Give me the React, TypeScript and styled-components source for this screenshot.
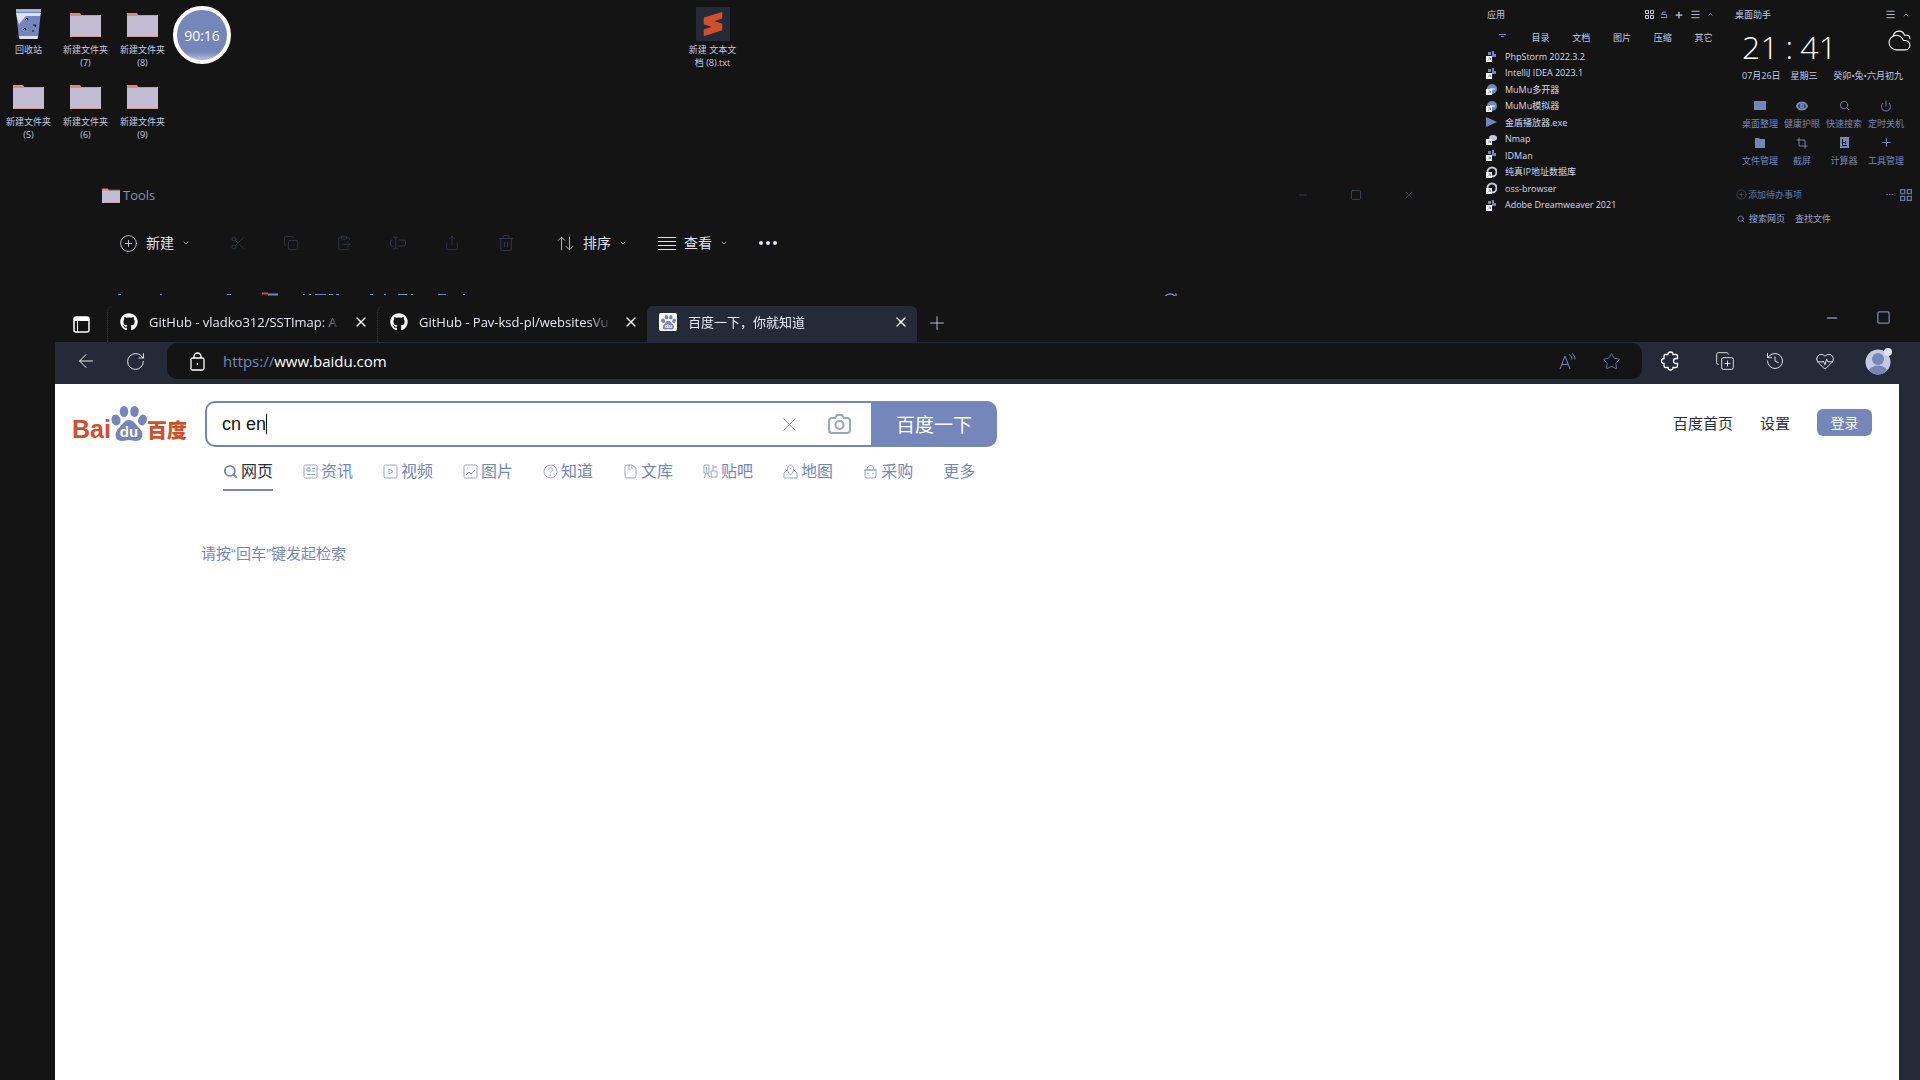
import React from "react";
import styled, { createGlobalStyle } from "styled-components";
import {
  ArrowUpDown, ArrowLeft, ChevronDown, ClipboardPaste, Cloudy, Copy, CopyPlus, Crop, Ellipsis, Eye,
  History, Menu, Minus, Plus, Power, RotateCw, Scissors, Search, Share,
  Square, Star, TextCursorInput, Trash2, X, CirclePlus, HeartPulse, ChevronUp,
} from "lucide-react";
import { FaGithub } from "react-icons/fa";
import { SiSublimetext } from "react-icons/si";

const c = {
  ink: "#141414",
  bar: "#252a39",
  blue: "#7586bb",
  pale: "#c3c9e2",
  dim: "#3a4260",
  red: "#d14f2b",
  white: "#ffffff",
};

const Global = createGlobalStyle`
  * { box-sizing: border-box; }
  body { margin: 0; background: ${c.ink}; }
  body, button, input { font-family: "Open Sans", "Noto Sans CJK SC", sans-serif; }
  button { padding: 0; border: 0; background: none; color: inherit; cursor: pointer; }
  a { color: inherit; text-decoration: none; }
  ul { list-style: none; margin: 0; padding: 0; }
  svg { display: block; flex: none; }
`;

const Desktop = styled.main`
  position: relative;
  min-height: 100vh;
  overflow: hidden;
  background: ${c.ink};
  color: ${c.white};
`;

/* ---------- desktop shortcuts ---------- */
const Shortcuts = styled.div`
  position: absolute;
  top: 8px;
  left: 0;
  display: grid;
  grid-template-columns: repeat(3, 57px);
  grid-auto-rows: 72px;
`;
const Shortcut = styled.button`
  display: flex;
  flex-direction: column;
  align-items: center;
  justify-content: flex-start;
  gap: 3px;
  width: 57px;
  font-size: 9px;
  line-height: 13px;
  color: ${c.pale};
`;
const ShortcutArt = styled.span`
  display: flex;
  align-items: center;
  justify-content: center;
  height: 32px;
`;
const LooseShortcut = styled.div`
  position: absolute;
  top: 8px;
  left: 684px;
`;
const SublimeTile = styled.span`
  display: flex;
  align-items: center;
  justify-content: center;
  width: 34px;
  height: 34px;
  background: ${c.bar};
  color: ${c.red};
`;
const Timer = styled.div`
  position: absolute;
  top: 6px;
  left: 173px;
  display: flex;
  align-items: center;
  justify-content: center;
  width: 58px;
  height: 58px;
  border: 4px solid ${c.white};
  border-radius: 50%;
  background: linear-gradient(${c.blue} 84%, #a9b3d6 96%);
  font-size: 14px;
`;

const Folder = ({ w = 31, h = 25 }: { w?: number; h?: number }) => (
  <svg width={w} height={h} viewBox="0 0 31 25" preserveAspectRatio="none" aria-hidden="true">
    <path d="M0 1h10l2 3v8H0z" fill="#d98a78" />
    <path d="M0 4h31v21H0z" fill="#c2bdd2" />
    <path d="M11 3.500h20M0 24.500h31" stroke="#d59a90" />
  </svg>
);

const Bin = () => (
  <svg width="27" height="32" viewBox="0 0 27 32" aria-hidden="true">
    <path d="M1 3h25l-3 28H4z" fill={c.blue} />
    <path d="M1 1h25v3H1z" fill="#aab3d4" />
    <path d="M1 5h25l-1 3H11L4 16 2 10z" fill="#dde1ef" />
    <path d="M4 28h19l-1 3H5z" fill="#dde1ef" />
    <path d="M10 12l2-2 1 2M8 22l2-2 1 2M18 17h3l-1 2M17 23h2" stroke={c.ink} fill="none" />
  </svg>
);

/* ---------- app list widget ---------- */
const Apps = styled.section`
  position: absolute;
  top: 8px;
  right: 196px;
  width: 240px;
  font-size: 9px;
  line-height: 13px;
  color: ${c.pale};
`;
const WidgetHead = styled.header`
  display: flex;
  align-items: center;
  justify-content: space-between;
  height: 13px;
  padding: 0 10px 0 3px;
`;
const WidgetTools = styled.div`
  display: flex;
  align-items: center;
  gap: 6px;
`;
const AppTabs = styled.nav`
  display: grid;
  grid-template-columns: 36px repeat(5, 1fr);
  margin-top: 10px;
  text-align: center;
`;
const AppTab = styled.button`
  display: flex;
  align-items: center;
  justify-content: center;
  height: 13px;
  font-size: 9px;
`;
const AppList = styled.ul`
  display: grid;
  grid-template-rows: repeat(10, 1fr);
  height: 165px;
  margin-top: 4px;
`;
const AppRow = styled.li`
  display: flex;
  align-items: center;
  gap: 8px;
  padding-left: 2px;
  color: #d6daeb;
`;

type AppArt = "badge" | "disc" | "play" | "ring" | "dot";
const AppIcon = ({ kind }: { kind: AppArt }) => (
  <svg width="11" height="12" viewBox="0 0 11 12" aria-hidden="true">
    {kind === "play" && <path d="M0 1l11 5-11 5z" fill={c.blue} />}
    {kind === "badge" && <path d="M2 2h3v3H2zM6 1h2v3h2v3H6z" fill={c.blue} />}
    {kind === "disc" && <circle cx="6" cy="6" r="5" fill={c.blue} />}
    {kind === "disc" && <path d="M4 6h5" stroke={c.white} />}
    {kind === "ring" && <circle cx="6" cy="6" r="4.500" fill="none" stroke={c.pale} strokeWidth="2" />}
    {kind === "dot" && <ellipse cx="7" cy="5" rx="4" ry="3" fill={c.pale} />}
    {kind !== "play" && <path d="M0 6h6v6H0z" fill={c.white} />}
    {kind !== "play" && <path d="M2 10.500l2-2M2.500 8h2v2" stroke={c.blue} fill="none" />}
  </svg>
);

const apps: { name: string; kind: AppArt }[] = [
  { name: "PhpStorm 2022.3.2", kind: "badge" },
  { name: "IntelliJ IDEA 2023.1", kind: "badge" },
  { name: "MuMu多开器", kind: "disc" },
  { name: "MuMu模拟器", kind: "disc" },
  { name: "金盾播放器.exe", kind: "play" },
  { name: "Nmap", kind: "dot" },
  { name: "IDMan", kind: "badge" },
  { name: "纯真IP地址数据库", kind: "ring" },
  { name: "oss-browser", kind: "ring" },
  { name: "Adobe Dreamweaver 2021", kind: "badge" },
];

/* ---------- assistant widget ---------- */
const Assistant = styled.section`
  position: absolute;
  top: 8px;
  right: 8px;
  width: 180px;
  font-size: 9px;
  line-height: 13px;
  color: ${c.pale};
`;
const AssistantHead = styled(WidgetHead)`
  padding: 0 2px 0 3px;
`;
const ClockRow = styled.div`
  display: flex;
  justify-content: space-between;
  height: 46px;
  padding: 7px 0 0 10px;
  color: ${c.white};
`;
const Clock = styled.time`
  display: flex;
  gap: 7px;
  font-size: 32px;
  font-weight: 300;
  line-height: 38px;
`;
const DateRow = styled.div`
  display: flex;
  justify-content: space-between;
  margin-top: 2px;
  padding: 0 9px 0 10px;
`;
const DateGroup = styled.div`
  display: flex;
  gap: 10px;
`;
const Actions = styled.div`
  display: grid;
  grid-template-columns: repeat(4, 1fr);
  row-gap: 5px;
  margin: 16px 5px 0 7px;
`;
const Action = styled.button`
  display: flex;
  flex-direction: column;
  align-items: center;
  gap: 4px;
  font-size: 9px;
  line-height: 13px;
  color: ${c.blue};
  white-space: nowrap;
`;
const ActionArt = styled.span`
  display: flex;
  align-items: center;
  justify-content: center;
  height: 15px;
`;
const Todo = styled.div`
  display: flex;
  align-items: center;
  justify-content: space-between;
  margin-top: 21px;
  padding-left: 4px;
  color: #6674a3;
`;
const TodoAdd = styled.button`
  display: flex;
  align-items: center;
  gap: 1px;
  font-size: 9px;
  line-height: 13px;
`;
const Finder = styled.div`
  display: flex;
  align-items: center;
  gap: 10px;
  margin-top: 11px;
  padding-left: 5px;
  color: #97a3cc;
`;
const FinderLink = styled.a`
  display: flex;
  align-items: center;
  gap: 4px;
`;

/* ---------- explorer window ---------- */
const Explorer = styled.section`
  position: absolute;
  top: 176px;
  left: 90px;
  width: 1360px;
  height: 120px;
  overflow: hidden;
`;
const ExplorerTitle = styled.header`
  display: flex;
  align-items: center;
  gap: 3px;
  height: 38px;
  padding: 0 35px 0 12px;
  font-size: 13px;
  color: #8491bd;
`;
const ExplorerControls = styled.div`
  display: flex;
  gap: 41px;
  margin-left: auto;
  color: #56628c;
`;
const ExplorerBar = styled.div`
  display: flex;
  align-items: center;
  height: 58px;
  padding: 0 0 0 29px;
`;
const Command = styled.button`
  display: flex;
  align-items: center;
  gap: 8px;
  font-size: 14px;
  line-height: 18px;
  color: #dfe3f1;
`;
const Faded = styled.div`
  display: flex;
  align-items: center;
  gap: 37px;
  margin: 0 41px 0 40px;
  color: ${c.dim};
`;
const Commands = styled.div`
  display: flex;
  align-items: center;
  gap: 31px;
`;
const PathRow = styled.div`
  display: flex;
  justify-content: space-between;
  padding: 20px 272px 0 5px;
  color: ${c.blue};
`;

/* ---------- browser window ---------- */
const Browser = styled.section`
  position: absolute;
  top: 300px;
  right: 0;
  bottom: 0;
  left: 55px;
  display: flex;
  flex-direction: column;
  background: ${c.ink};
`;
const TabStrip = styled.header`
  display: flex;
  align-items: stretch;
  height: 42px;
  padding: 6px 29px 0 18px;
`;
const TabMenu = styled.button`
  display: flex;
  align-items: center;
  width: 34px;
`;
const Tab = styled.div<{ $active?: boolean }>`
  display: flex;
  align-items: center;
  gap: 11px;
  width: 270px;
  padding: 0 8px 4px 12px;
  border-radius: 6px 6px 0 0;
  border-left: ${(p) => (p.$active ? "0" : "1px dotted " + c.dim)};
  background: ${(p) => (p.$active ? c.bar : "transparent")};
`;
const TabTitle = styled.span`
  flex: 1;
  overflow: hidden;
  font-size: 13px;
  line-height: 20px;
  white-space: nowrap;
  mask-image: linear-gradient(90deg, #000 88%, transparent);
  color: #e6e9f4;
`;
const NewTab = styled.button`
  display: flex;
  align-items: center;
  margin-left: 9px;
  padding-bottom: 2px;
  color: ${c.pale};
`;
const BrowserControls = styled.div`
  display: flex;
  align-items: center;
  gap: 36px;
  margin-left: auto;
  padding-bottom: 13px;
  color: ${c.blue};
`;
const Toolbar = styled.div`
  display: flex;
  align-items: center;
  height: 42px;
  padding: 0 27px 4px 20px;
  background: ${c.bar};
`;
const ToolGroup = styled.div<{ $gap: number }>`
  display: flex;
  align-items: center;
  gap: ${(p) => p.$gap}px;
`;
const AddressBar = styled.label`
  display: flex;
  flex: 1;
  align-items: center;
  height: 36px;
  margin: 0 19px 0 21px;
  padding: 0 21px 0 23px;
  border-radius: 10px;
  background: ${c.ink};
  font-size: 15px;
`;
const Scheme = styled.span`
  margin-left: 18px;
  color: ${c.blue};
`;
const AddressInput = styled.input`
  flex: 1;
  min-width: 0;
  padding: 0;
  border: 0;
  outline: 0;
  background: transparent;
  color: ${c.white};
  font-size: 15px;
`;
const Avatar = styled.button`
  width: 28px;
  height: 28px;
`;
const Body = styled.div`
  display: flex;
  flex: 1;
  padding-right: 21px;
  background: ${c.bar};
`;
const Page = styled.article`
  flex: 1;
  padding: 17px 27px 0 17px;
  background: ${c.white};
  color: ${c.ink};
  font-family: "Liberation Sans", "Noto Sans CJK SC", sans-serif;
`;
const PageTop = styled.div`
  display: flex;
  align-items: flex-start;
`;
const Logo = styled.a`
  display: flex;
  flex: none;
  align-items: flex-end;
  width: 115px;
  height: 41px;
  margin-right: 18px;
  color: ${c.red};
  font-weight: 900;
  white-space: nowrap;
`;
const LogoLatin = styled.span`
  width: 39px;
  font-size: 25px;
  line-height: 25px;
`;
const LogoHan = styled.span`
  font-family: "Noto Sans CJK SC", sans-serif;
  font-size: 20px;
  line-height: 24px;
`;
const SearchForm = styled.form`
  display: flex;
  width: 792px;
  height: 46px;
`;
const SearchBox = styled.label`
  display: flex;
  flex: 1;
  align-items: center;
  padding: 0 20px 0 15px;
  border: 2px solid ${c.blue};
  border-right: 0;
  border-radius: 10px 0 0 10px;
`;
const Query = styled.input`
  field-sizing: content;
  padding: 0;
  border: 0;
  outline: 0;
  color: ${c.ink};
  font-family: "Liberation Sans", sans-serif;
  font-size: 18px;
`;
const Caret = styled.span`
  width: 1px;
  height: 20px;
  background: ${c.ink};
`;
const SearchTools = styled.div`
  display: flex;
  align-items: center;
  gap: 27px;
  margin-left: auto;
  color: ${c.blue};
`;
const Submit = styled.button`
  width: 126px;
  border-radius: 0 10px 10px 0;
  background: ${c.blue};
  color: ${c.white};
  font-size: 19px;
`;
const Account = styled.nav`
  display: flex;
  align-items: center;
  gap: 27px;
  margin: 6px 0 0 auto;
  font-size: 15px;
  line-height: 27px;
`;
const AccountLink = styled.a`
  padding-top: 3px;
  color: #2b2f40;
`;
const Login = styled.button`
  width: 55px;
  height: 27px;
  border-radius: 6px;
  background: ${c.blue};
  color: ${c.white};
  font-size: 14px;
`;
const Channels = styled.nav`
  display: flex;
  gap: 30px;
  margin: 13px 0 0 151px;
`;
const Channel = styled.a<{ $on?: boolean }>`
  display: flex;
  align-items: center;
  gap: 3px;
  height: 31px;
  padding-bottom: 6px;
  border-bottom: 2px solid ${(p) => (p.$on ? c.blue : "transparent")};
  color: ${(p) => (p.$on ? "#2b2f40" : c.blue)};
  font-size: 16px;
  line-height: 22px;
`;
const Hint = styled.p`
  margin: 52px 0 0 129px;
  color: ${c.blue};
  font-size: 15px;
  line-height: 22px;
`;

const Paw = ({ size }: { size: number }) => (
  <svg width={size} height={size} viewBox="0 0 36 36" aria-hidden="true">
    <g fill={c.blue}>
      <ellipse cx="5" cy="14" rx="4.500" ry="5.500" transform="rotate(-15 5 14)" />
      <ellipse cx="13" cy="5.500" rx="4.200" ry="5.500" />
      <ellipse cx="23.500" cy="5.500" rx="4.200" ry="5.500" />
      <ellipse cx="31.500" cy="14" rx="4.300" ry="5.500" transform="rotate(15 31.500 14)" />
      <path d="M18 14c5 0 7 5 10 8 5 4 5 13-3 13-3 0-4-1-7-1s-4 1-7 1c-8 0-8-9-3-13 3-3 5-8 10-8z" />
    </g>
    <text x="18" y="31" textAnchor="middle" fontFamily="Liberation Sans" fontWeight="700" fontSize="15" fill={c.white}>du</text>
  </svg>
);

const BaiduTile = styled.span`
  display: flex;
  align-items: center;
  justify-content: center;
  width: 18px;
  height: 18px;
  border-radius: 2px;
  background: ${c.white};
`;

const Camera = () => (
  <svg width="23" height="20" viewBox="0 0 23 20" fill="none" stroke="#98a4cc" strokeWidth="2" aria-hidden="true">
    <path d="M4 4h3l2-3h5l2 3h3a3 3 0 0 1 3 3v9a3 3 0 0 1-3 3H4a3 3 0 0 1-3-3V7a3 3 0 0 1 3-3z" />
    <circle cx="11.500" cy="11" r="4" />
  </svg>
);

const channelPaths: Record<string, string> = {
  资讯: "M2.500 1h10a1.500 1.500 0 0 1 1.500 1.500v10a1.500 1.500 0 0 1-1.500 1.500h-10A1.500 1.500 0 0 1 1 12.500v-10A1.500 1.500 0 0 1 2.500 1zM4 4h3v3H4zM9 4.500h3M9 7h3M4 10.500h8",
  视频: "M2.500 1h10a1.500 1.500 0 0 1 1.500 1.500v10a1.500 1.500 0 0 1-1.500 1.500h-10A1.500 1.500 0 0 1 1 12.500v-10A1.500 1.500 0 0 1 2.500 1zM6 5l4 2.500L6 10z",
  图片: "M2.500 1h10a1.500 1.500 0 0 1 1.500 1.500v10a1.500 1.500 0 0 1-1.500 1.500h-10A1.500 1.500 0 0 1 1 12.500v-10A1.500 1.500 0 0 1 2.500 1zM3 11l3-3 2 2 4-4M4 4h1",
  知道: "M7.500 1a6.500 6.500 0 1 1 0 13 6.500 6.500 0 0 1 0-13zM5.500 6c0-3 4-3 4 0 0 1.500-2 1.500-2 3M7.500 10.500v1",
  文库: "M4 1h5l4 3v8a2 2 0 0 1-2 2H4a2 2 0 0 1-2-2V3a2 2 0 0 1 2-2zM6 1v5M9 1v4",
  贴吧: "M1 1h5v8H1zM3.500 3v5M3 9l-2 5M4 9l3 4M10 1v6M10 3h4M8 7h6v6H8z",
  地图: "M4 6L1 9v5h13V9l-3-3M7.500 11C3 7 4 1 7.500 1S12 7 7.500 11zM7.500 4v1",
  采购: "M2 6h11v6a2 2 0 0 1-2 2H4a2 2 0 0 1-2-2zM1 6h13M4 6c0-6 7-6 7 0M5 9v1M10 9v1",
};
const ChannelIcon = ({ name }: { name: string }) => (
  <svg width="15" height="15" viewBox="0 0 15 15" fill="none" stroke="#98a4cc" aria-hidden="true">
    <path d={channelPaths[name]} />
  </svg>
);

const DeskPlate = () => (
  <svg width="12" height="10" viewBox="0 0 12 10" aria-hidden="true">
    <path d="M0 0h12v9H0z" fill={c.blue} />
    <path d="M3 3h1M7 3h1M5 6h1M9 6h1" stroke={c.red} />
  </svg>
);
const FolderPlate = () => (
  <svg width="10" height="10" viewBox="0 0 10 10" aria-hidden="true">
    <path d="M0 0h4l1 1h5v9H0z" fill={c.blue} />
    <path d="M2 4h1M6 4h1M4 7h1" stroke={c.red} />
  </svg>
);
const CalcPlate = () => (
  <svg width="9" height="11" viewBox="0 0 9 11" aria-hidden="true">
    <path d="M0 0h9v11H0z" fill={c.blue} />
    <path d="M2.500 2v7M2 8.500h5M3 5.500h3M5.500 4v3" stroke={c.ink} />
  </svg>
);
const FourSquares = ({ size }: { size: number }) => (
  <svg width={size} height={size} viewBox="0 0 9 9" fill="none" stroke="currentColor" aria-hidden="true">
    <path d="M.5.5h3v3h-3zM5.500.5h3v3h-3zM.5 5.500h3v3h-3zM5.500 5.500h3v3h-3z" />
  </svg>
);
const Loop = () => (
  <svg width="8" height="8" viewBox="0 0 8 8" fill="none" stroke={c.blue} aria-hidden="true">
    <path d="M6 1H3L1.500 3.500H6.500L7 6.500H1" />
  </svg>
);

const actions: { label: string; art: React.ReactNode }[] = [
  { label: "桌面整理", art: <DeskPlate /> },
  { label: "健康护眼", art: <Eye size={12} strokeWidth={4} /> },
  { label: "快速搜索", art: <Search size={11} /> },
  { label: "定时关机", art: <Power size={12} /> },
  { label: "文件管理", art: <FolderPlate /> },
  { label: "截屏", art: <Crop size={12} /> },
  { label: "计算器", art: <CalcPlate /> },
  { label: "工具管理", art: <Plus size={13} /> },
];

const ReadAloud = () => (
  <svg width="17" height="17" viewBox="0 0 17 17" fill="none" stroke={c.blue} aria-hidden="true">
    <path d="M1 16L6 3l5 13M3 11.500h6M10 1.500c2 1 3 3 3 5M13 .5c2 1 3 3.500 3 6" />
  </svg>
);
const Panel = () => (
  <svg width="17" height="17" viewBox="0 0 17 17" fill="none" stroke={c.white} aria-hidden="true">
    <rect x="1" y="1" width="15" height="15" rx="2" strokeWidth="1.500" />
    <path d="M1 3h15" strokeWidth="4" />
    <path d="M4.500 4v12" />
  </svg>
);
const Padlock = () => (
  <svg width="15" height="19" viewBox="0 0 15 19" fill="none" stroke={c.white} strokeWidth="1.300" aria-hidden="true">
    <rect x="1" y="6" width="13" height="12" rx="1.500" />
    <path d="M4 6V4.500a3.500 3.500 0 0 1 7 0V6" />
    <path d="M7.500 11v2" />
  </svg>
);
const Extension = () => (
  <svg width="24" height="20" viewBox="0 0 24 20" fill="none" stroke={c.white} strokeWidth="1.300" aria-hidden="true">
    <path d="M4 3.500h3a2.500 2.500 0 0 1 5 0h3a1.500 1.500 0 0 1 1.500 1.500v2.500h-1.500a2.500 2.500 0 0 0 0 5h1.500V15a1.500 1.500 0 0 1-1.500 1.500h-3a2.500 2.500 0 0 1-5 0H4.500A1.500 1.500 0 0 1 3 15v-2.500a2.500 2.500 0 0 1 0-5V5a1.500 1.500 0 0 1 1-1.500z" />
  </svg>
);

export default function App() {
  return (
    <>
      <Global />
      <Desktop>
        <Shortcuts>
          <Shortcut><ShortcutArt><Bin /></ShortcutArt>回收站</Shortcut>
          {[7, 8, 5, 6, 9].map((n) => (
            <Shortcut key={n}>
              <ShortcutArt><Folder /></ShortcutArt>
              <span>新建文件夹<br />({n})</span>
            </Shortcut>
          ))}
        </Shortcuts>
        <Timer>90:16</Timer>
        <LooseShortcut>
          <Shortcut>
            <ShortcutArt><SublimeTile><SiSublimetext size={24} /></SublimeTile></ShortcutArt>
            <span>新建 文本文<br />档 (8).txt</span>
          </Shortcut>
        </LooseShortcut>

        <Apps>
          <WidgetHead>
            <span>应用</span>
            <WidgetTools>
              <FourSquares size={9} />
              <Loop />
              <Plus size={10} strokeWidth={3} />
              <Menu size={11} />
              <ChevronUp size={7} />
            </WidgetTools>
          </WidgetHead>
          <AppTabs>
            <AppTab aria-label="Menu">
              <svg width="7" height="9" viewBox="0 0 7 9" stroke={c.blue} aria-hidden="true"><path d="M0 1.500h7M2 3.500h3" /></svg>
            </AppTab>
            {["目录", "文档", "图片", "压缩", "其它"].map((t) => <AppTab key={t}>{t}</AppTab>)}
          </AppTabs>
          <AppList>
            {apps.map((a) => (
              <AppRow key={a.name}>
                <AppIcon kind={a.kind} />
                <a href="#">{a.name}</a>
              </AppRow>
            ))}
          </AppList>
        </Apps>

        <Assistant>
          <AssistantHead>
            <span>桌面助手</span>
            <WidgetTools><Menu size={11} /><ChevronUp size={8} /></WidgetTools>
          </AssistantHead>
          <ClockRow>
            <Clock><span>21</span><span>:</span><span>41</span></Clock>
            <Cloudy size={25} strokeWidth={1} />
          </ClockRow>
          <DateRow>
            <DateGroup><span>07月26日</span><span>星期三</span></DateGroup>
            <span>癸卯•兔•六月初九</span>
          </DateRow>
          <Actions>
            {actions.map((a) => (
              <Action key={a.label}><ActionArt>{a.art}</ActionArt>{a.label}</Action>
            ))}
          </Actions>
          <Todo>
            <TodoAdd><CirclePlus size={11} strokeWidth={1} />添加待办事项</TodoAdd>
            <WidgetTools><Ellipsis size={9} /><FourSquares size={12} /></WidgetTools>
          </Todo>
          <Finder>
            <FinderLink href="#"><Search size={8} />搜索网页</FinderLink>
            <FinderLink href="#">查找文件</FinderLink>
          </Finder>
        </Assistant>

        <Explorer>
          <ExplorerTitle>
            <Folder w={18} h={15} />
            <span>Tools</span>
            <ExplorerControls>
              <Minus size={12} strokeWidth={1} />
              <Square size={12} strokeWidth={1} />
              <X size={12} strokeWidth={1} />
            </ExplorerControls>
          </ExplorerTitle>
          <ExplorerBar>
            <Command><CirclePlus size={19} strokeWidth={1} />新建<ChevronDown size={8} /></Command>
            <Faded>
              <Scissors size={16} strokeWidth={1} />
              <Copy size={16} strokeWidth={1} />
              <ClipboardPaste size={16} strokeWidth={1} />
              <TextCursorInput size={18} strokeWidth={1} />
              <Share size={16} strokeWidth={1} />
              <Trash2 size={18} strokeWidth={1} />
            </Faded>
            <Commands>
              <Command><ArrowUpDown size={19} strokeWidth={1} />排序<ChevronDown size={8} /></Command>
              <Command>
                <svg width="18" height="14" viewBox="0 0 18 14" stroke="currentColor" aria-hidden="true"><path d="M0 1.500h18M0 5.500h18M0 9.500h18M0 13.500h18" /></svg>
                查看<ChevronDown size={8} />
              </Command>
              <Command aria-label="More">
                <svg width="18" height="4" viewBox="0 0 18 4" fill="currentColor" aria-hidden="true"><circle cx="2" cy="2" r="2" /><circle cx="9" cy="2" r="2" /><circle cx="16" cy="2" r="2" /></svg>
              </Command>
            </Commands>
          </ExplorerBar>
          <PathRow>
            {/* the address row sits mostly behind the browser: only the tops of its marks show */}
            <svg width="380" height="5" viewBox="0 0 380 5" stroke="currentColor" aria-hidden="true">
              <path d="M23 2.500h3M65 2.500h2M132 2.500h4M208 2.500h2M214 2.500h2M220 2.500h11M234 2.500h4M241 2.500h3M275 2.500h3M289 2.500h2M303 2.500h9M316 2.500h2M343 2.500h8M368 2.500h2" />
              <path d="M167 1.500h6" stroke={c.red} strokeWidth="2" />
              <path d="M173 2.500h10" strokeWidth="2" />
            </svg>
            <RotateCw size={16} />
          </PathRow>
        </Explorer>

        <Browser>
          <TabStrip>
            <TabMenu aria-label="Tab actions"><Panel /></TabMenu>
            <Tab>
              <FaGithub size={18} />
              <TabTitle>GitHub - vladko312/SSTImap: A</TabTitle>
              <button aria-label="Close tab"><X size={16} strokeWidth={2} /></button>
            </Tab>
            <Tab>
              <FaGithub size={18} />
              <TabTitle>GitHub - Pav-ksd-pl/websitesVu</TabTitle>
              <button aria-label="Close tab"><X size={16} strokeWidth={2} /></button>
            </Tab>
            <Tab $active>
              <BaiduTile><Paw size={15} /></BaiduTile>
              <TabTitle>百度一下，你就知道</TabTitle>
              <button aria-label="Close tab"><X size={16} strokeWidth={2} /></button>
            </Tab>
            <NewTab aria-label="New tab"><Plus size={22} strokeWidth={1} /></NewTab>
            <BrowserControls>
              <Minus size={16} strokeWidth={2} />
              <Square size={15} strokeWidth={2} />
            </BrowserControls>
          </TabStrip>
          <Toolbar>
            <ToolGroup $gap={28}>
              <button aria-label="Back"><ArrowLeft size={22} strokeWidth={1} /></button>
              <button aria-label="Reload"><RotateCw size={21} strokeWidth={1} /></button>
            </ToolGroup>
            <AddressBar>
              <Padlock />
              <Scheme>https://</Scheme>
              <AddressInput aria-label="Address" defaultValue="www.baidu.com" />
              <ToolGroup $gap={26}>
                <ReadAloud />
                <Star size={19} strokeWidth={1} color={c.blue} />
              </ToolGroup>
            </AddressBar>
            <ToolGroup $gap={30}>
              <Extension />
              <CopyPlus size={20} strokeWidth={1} />
              <History size={20} strokeWidth={1} />
              <HeartPulse size={20} strokeWidth={1} />
              <Avatar aria-label="Profile">
                <svg width="28" height="28" viewBox="0 0 28 28" aria-hidden="true">
                  <circle cx="13" cy="15" r="12.500" fill={c.pale} />
                  <circle cx="13" cy="12" r="6" fill={c.blue} />
                  <path d="M4 23c3-6 15-6 18 0-4 6-14 6-18 0z" fill={c.blue} />
                  <path d="M14 9h1M10 13h1M8 22h1M18 21h1" stroke={c.red} />
                  <circle cx="23" cy="5" r="4" fill="#dfe3f1" />
                </svg>
              </Avatar>
            </ToolGroup>
          </Toolbar>
          <Body>
            <Page>
              <PageTop>
                <Logo href="#" aria-label="百度">
                  <LogoLatin>Bai</LogoLatin>
                  <Paw size={36} />
                  <LogoHan>百度</LogoHan>
                </Logo>
                <SearchForm onSubmit={(e) => e.preventDefault()}>
                  <SearchBox>
                    <Query aria-label="搜索" defaultValue="cn en" />
                    <Caret />
                    <SearchTools>
                      <X size={23} strokeWidth={1} />
                      <Camera />
                    </SearchTools>
                  </SearchBox>
                  <Submit type="submit">百度一下</Submit>
                </SearchForm>
                <Account>
                  <AccountLink href="#">百度首页</AccountLink>
                  <AccountLink href="#">设置</AccountLink>
                  <Login>登录</Login>
                </Account>
              </PageTop>
              <Channels>
                <Channel href="#" $on><Search size={15} strokeWidth={3} color={c.blue} />网页</Channel>
                {Object.keys(channelPaths).map((n) => (
                  <Channel key={n} href="#"><ChannelIcon name={n} />{n}</Channel>
                ))}
                <Channel href="#">更多</Channel>
              </Channels>
              <Hint>请按“回车”键发起检索</Hint>
            </Page>
          </Body>
        </Browser>
      </Desktop>
    </>
  );
}
